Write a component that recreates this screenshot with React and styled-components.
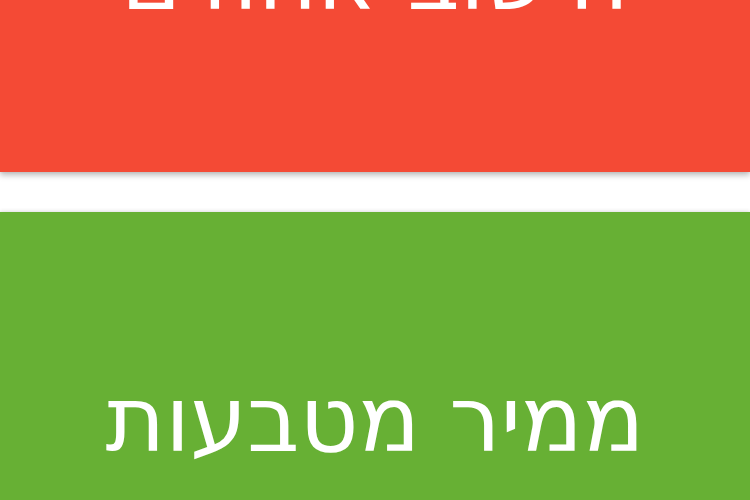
import React, { useLayoutEffect, useRef } from 'react';
import styled, { createGlobalStyle } from 'styled-components';

const GlobalStyle = createGlobalStyle`
  html, body {
    margin: 0;
    padding: 0;
    background: #fff;
    overflow: hidden;
  }
`;

const tools = [
  { id: 'percent', title: 'חישוב אחוזים', color: '#f44a35' },
  { id: 'currency', title: 'ממיר מטבעות', color: '#67b034' },
  { id: 'units', title: 'המרת יחידות', color: '#2f8fd8' },
];

function App() {
  const listRef = useRef(null);

  useLayoutEffect(() => {
    // the menu is shown scrolled part way down
    if (listRef.current) listRef.current.scrollTop = 230;
  }, []);

  return (
    <>
      <GlobalStyle />
      <Screen ref={listRef}>
        <List>
          {tools.map(tool => (
            <Tile key={tool.id} $bg={tool.color}>
              <Title>{tool.title}</Title>
            </Tile>
          ))}
        </List>
      </Screen>
    </>
  );
}

export default App;

const Screen = styled.div`
  height: 100vh;
  overflow-y: auto;
  scrollbar-width: none;
  &::-webkit-scrollbar {
    display: none;
  }
`;

const List = styled.div`
  display: flex;
  flex-direction: column;
  gap: 40px;
  padding-bottom: 40px;
`;

const Tile = styled.button`
  display: flex;
  align-items: center;
  justify-content: center;
  height: 402px;
  width: 100%;
  border: none;
  padding: 0;
  background: ${p => p.$bg};
  box-shadow: 0 3px 6px rgba(0, 0, 0, 0.28), 0 -1px 4px rgba(0, 0, 0, 0.08);
  cursor: pointer;
`;

const Title = styled.span`
  direction: rtl;
  color: #fff;
  font-family: 'DejaVu Sans', sans-serif;
  font-size: 91px;
  line-height: 1;
  padding-top: 12px;
`;
